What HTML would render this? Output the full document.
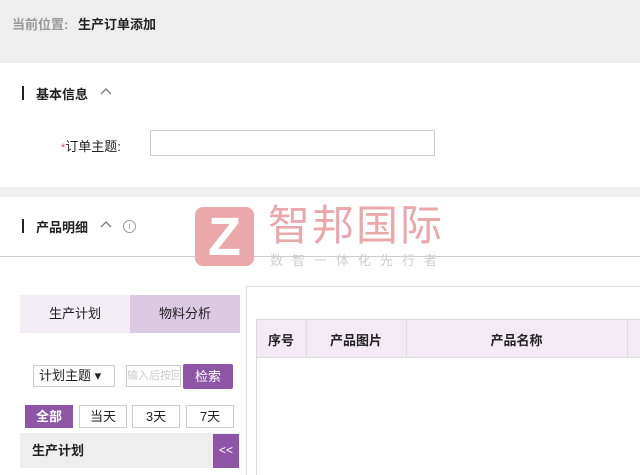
<!DOCTYPE html><html><head><meta charset="utf-8"><style>
*{margin:0;padding:0;box-sizing:border-box}
html,body{width:640px;height:475px;overflow:hidden}
body{position:relative;background:#fff;font-family:"Liberation Sans","Noto Sans CJK SC",sans-serif;font-size:13px;color:#222}
.a{position:absolute}
</style></head><body>
<div class="a" style="left:0;top:0;width:640px;height:63px;background:#eeeeee"></div>
<div class="a" style="left:12px;top:14px;font-size:13px;color:#999;font-weight:bold">当前位置: <span style="color:#222;margin-left:6px">生产订单添加</span></div>
<div class="a" style="left:22px;top:86px;width:2px;height:14px;background:#222"></div>
<div class="a" style="left:36px;top:84px;font-weight:bold">基本信息</div>
<svg class="a" style="left:100px;top:88px" width="12" height="8"><path d="M1 6L6 1L11 6" fill="none" stroke="#777" stroke-width="1.3"/></svg>
<div class="a" style="left:61px;top:136px"><span style="color:#e0457b;font-size:11px">*</span>订单主题:</div>
<div class="a" style="left:150px;top:130px;width:285px;height:26px;border:1px solid #ccc"></div>
<div class="a" style="left:0;top:187px;width:640px;height:10px;background:#eeeeee"></div>
<div class="a" style="left:22px;top:219px;width:2px;height:14px;background:#222"></div>
<div class="a" style="left:36px;top:217px;font-weight:bold">产品明细</div>
<svg class="a" style="left:100px;top:221px" width="12" height="8"><path d="M1 6L6 1L11 6" fill="none" stroke="#777" stroke-width="1.3"/></svg>
<div class="a" style="left:123px;top:220px;width:13px;height:13px;border:1px solid #999;border-radius:50%;font-size:9px;color:#999;text-align:center;line-height:11px">i</div>
<div class="a" style="left:0;top:256px;width:640px;height:1px;background:#ccc"></div>
<div class="a" style="left:195px;top:207px;width:59px;height:59px;background:#eba8aa;border-radius:8px;color:#fff;font-size:54px;font-weight:bold;text-align:center;line-height:60px">Z</div>
<div class="a" style="left:268px;top:202px;font-size:42px;color:#eba8aa;letter-spacing:2px;line-height:48px">智邦国际</div>
<div class="a" style="left:270px;top:250px;font-size:13px;color:#ccc;letter-spacing:9px">数智一体化先行者</div>
<div class="a" style="left:20px;top:295px;width:110px;height:38px;background:#f3eef5;text-align:center;line-height:38px">生产计划</div>
<div class="a" style="left:130px;top:295px;width:110px;height:38px;background:#dcc9e2;text-align:center;line-height:38px">物料分析</div>
<div class="a" style="left:33px;top:365px;width:82px;height:22px;border:1px solid #ccc;line-height:20px;padding-left:5px">计划主题 ▾</div>
<div class="a" style="left:126px;top:365px;width:55px;height:22px;border:1px solid #ccc;line-height:20px;font-size:11px;color:#ccc;overflow:hidden;white-space:nowrap">输入后按回</div>
<div class="a" style="left:183px;top:364px;width:50px;height:25px;background:#8e55a7;color:#fff;border-radius:2px;text-align:center;line-height:25px">检索</div>
<div class="a" style="left:25px;top:405px;width:48px;height:23px;background:#8e55a7;color:#fff;font-weight:bold;text-align:center;line-height:23px">全部</div>
<div class="a" style="left:79px;top:405px;width:48px;height:23px;border:1px solid #ccc;text-align:center;line-height:21px">当天</div>
<div class="a" style="left:132px;top:405px;width:48px;height:23px;border:1px solid #ccc;text-align:center;line-height:21px">3天</div>
<div class="a" style="left:186px;top:405px;width:48px;height:23px;border:1px solid #ccc;text-align:center;line-height:21px">7天</div>
<div class="a" style="left:20px;top:433px;width:220px;height:35px;background:#eeeeee;font-weight:bold;line-height:35px;padding-left:12px">生产计划</div>
<div class="a" style="left:213px;top:434px;width:26px;height:34px;background:#8e55a7;color:#fff;text-align:center;line-height:32px;font-size:12px">&lt;&lt;</div>
<div class="a" style="left:246px;top:286px;width:394px;height:189px;border-left:1px solid #ddd;border-top:1px solid #ddd"></div>
<div class="a" style="left:256px;top:319px;width:384px;height:39px;background:#f3eaf6;border:1px solid #ddd;border-right:none"></div>
<div class="a" style="left:306px;top:319px;width:1px;height:39px;background:#ddd"></div>
<div class="a" style="left:406px;top:319px;width:1px;height:39px;background:#ddd"></div>
<div class="a" style="left:627px;top:319px;width:1px;height:39px;background:#ddd"></div>
<div class="a" style="left:256px;top:358px;width:1px;height:117px;background:#ddd"></div>
<div class="a" style="left:256px;top:330px;width:50px;text-align:center;font-weight:bold">序号</div>
<div class="a" style="left:306px;top:330px;width:100px;text-align:center;font-weight:bold">产品图片</div>
<div class="a" style="left:406px;top:330px;width:221px;text-align:center;font-weight:bold">产品名称</div>
</body></html>
